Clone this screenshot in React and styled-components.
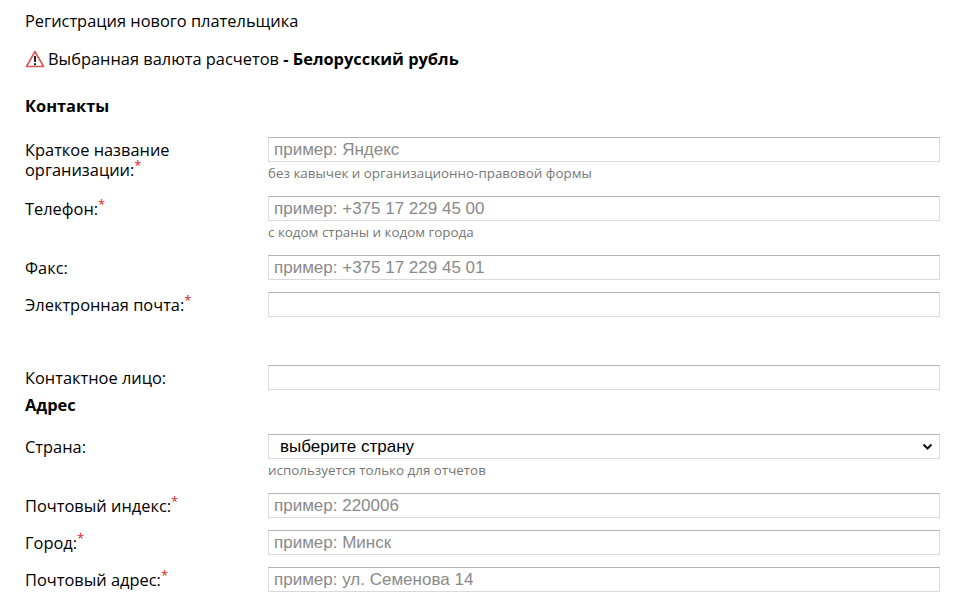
import styled, { createGlobalStyle } from "styled-components";

const Global = createGlobalStyle`
  body { margin: 0; background: #fff; font-family: "Open Sans", "Noto Sans", sans-serif; color: #000; }
`;

const Page = styled.div`
  padding: 10px 25px 0 25px;
  width: 915px;
`;

const Title = styled.div`
  font-size: 16.4px;
  line-height: 22px;
`;

const Notice = styled.div`
  display: flex;
  align-items: center;
  gap: 3px;
  margin-top: 16px;
  font-size: 16.4px;
  line-height: 22px;
  b { font-weight: 700; }
`;

const Heading = styled.div`
  font-weight: 700;
  font-size: 16.4px;
  line-height: 22px;
  margin-top: ${(p) => p.$top}px;
  margin-bottom: ${(p) => p.$bottom}px;
`;

const Row = styled.div`
  display: grid;
  grid-template-columns: 243px 672px;
  margin-bottom: ${(p) => p.$gap || 12}px;
`;

const Label = styled.div`
  font-size: 16.4px;
  line-height: 20px;
  padding-top: 3px;
  sup { color: #e02020; font-size: 13px; line-height: 0; }
`;

const Input = styled.input`
  box-sizing: border-box;
  display: block;
  width: 100%;
  height: 25px;
  border: 1px solid #d9d9d9;
  border-top-color: #b3b3b3;
  padding: 0 5px;
  font-family: "Liberation Sans", Arial, sans-serif;
  font-size: 17px;
  outline: none;
  &::placeholder { color: #8a8a8a; }
`;

const Select = styled.div`
  box-sizing: border-box;
  height: 25px;
  border: 1px solid #d9d9d9;
  border-top-color: #b3b3b3;
  padding: 0 6px 0 11px;
  display: flex;
  align-items: center;
  justify-content: space-between;
  font-family: "Liberation Sans", Arial, sans-serif;
  font-size: 17px;
`;

const Hint = styled.div`
  font-size: 13.4px;
  line-height: 16px;
  color: #777;
  margin-top: 3px;
  margin-bottom: 3px;
`;

const Field = ({ label, req, ph, hint, gap }) => (
  <Row $gap={gap}>
    <Label>
      {label}
      {req && <sup>*</sup>}
    </Label>
    <div>
      <Input placeholder={ph} />
      {hint && <Hint>{hint}</Hint>}
    </div>
  </Row>
);

export default function App() {
  return (
    <Page>
      <Global />
      <Title>Регистрация нового плательщика</Title>
      <Notice>
        <svg width="20" height="18" viewBox="0 0 20 18">
          <path d="M10 1.5 L18.5 16.5 H1.5 Z" fill="#fff" stroke="#e05555" strokeWidth="1.6" strokeLinejoin="round" />
          <rect x="9" y="6" width="2" height="6" fill="#222" />
          <rect x="9" y="13.2" width="2" height="2" fill="#222" />
        </svg>
        <span>
          Выбранная валюта расчетов <b>- Белорусский рубль</b>
        </span>
      </Notice>
      <Heading $top={25} $bottom={20}>Контакты</Heading>
      <Field label={<>Краткое название<br />организации:</>} req ph="пример: Яндекс" hint="без кавычек и организационно-правовой формы" />
      <Field label="Телефон:" req ph="пример: +375 17 229 45 00" hint="с кодом страны и кодом города" />
      <Field label="Факс:" ph="пример: +375 17 229 45 01" />
      <Field label="Электронная почта:" req gap={48} />
      <Field label="Контактное лицо:" gap={4} />
      <Heading $top={0} $bottom={18}>Адрес</Heading>
      <Row $gap={12}>
        <Label>Страна:</Label>
        <div>
          <Select>
            <span>выберите страну</span>
            <svg width="11" height="8" viewBox="0 0 11 8">
              <path d="M1.5 1.5 L5.5 5.5 L9.5 1.5" fill="none" stroke="#111" strokeWidth="2" />
            </svg>
          </Select>
          <Hint>используется только для отчетов</Hint>
        </div>
      </Row>
      <Field label="Почтовый индекс:" req ph="пример: 220006" />
      <Field label="Город:" req ph="пример: Минск" />
      <Field label="Почтовый адрес:" req ph="пример: ул. Семенова 14" />
    </Page>
  );
}
